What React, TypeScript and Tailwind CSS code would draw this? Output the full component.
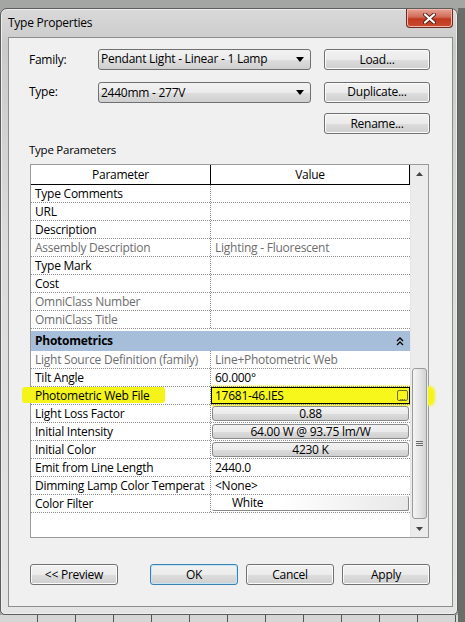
import type { ReactNode } from "react";

// Revit "Type Properties" dialog, Windows 7 look.
type Row = { label: string; value?: string; kind?: "text" | "button" | "file" | "swatch"; dim?: boolean };

const identity: Row[] = [
  { label: "Type Comments" },
  { label: "URL" },
  { label: "Description" },
  { label: "Assembly Description", value: "Lighting - Fluorescent", dim: true },
  { label: "Type Mark" },
  { label: "Cost" },
  { label: "OmniClass Number", dim: true },
  { label: "OmniClass Title", dim: true },
];

const photometrics: Row[] = [
  { label: "Light Source Definition (family)", value: "Line+Photometric Web", dim: true },
  { label: "Tilt Angle", value: "60.000°" },
  { label: "Photometric Web File", value: "17681-46.IES", kind: "file" },
  { label: "Light Loss Factor", value: "0.88", kind: "button" },
  { label: "Initial Intensity", value: "64.00 W @ 93.75 lm/W", kind: "button" },
  { label: "Initial Color", value: "4230 K", kind: "button" },
  { label: "Emit from Line Length", value: "2440.0" },
  { label: "Dimming Lamp Color Temperat", value: "<None>" },
  { label: "Color Filter", value: "White", kind: "swatch" },
];

const btnFace =
  "bg-[linear-gradient(to_bottom,#f2f2f2_0%,#ebebeb_50%,#dddddd_51%,#cfcfcf_100%)]";

function Btn({ children, w, primary }: { children: ReactNode; w: string; primary?: boolean }) {
  return (
    <div
      className={`${w} h-[21px] flex items-center justify-center rounded-[3px] border text-[12px] text-black ${btnFace} ${
        primary ? "border-[#3c7fb1] shadow-[inset_0_0_0_1px_#c4e5f6]" : "border-[#707070] shadow-[inset_0_0_0_1px_#fbfbfb]"
      }`}
    >
      {children}
    </div>
  );
}

function Combo({ text }: { text: string }) {
  return (
    <div className={`w-[213px] h-[21px] flex items-center justify-between rounded-[3px] border border-[#707070] pl-[2px] pr-[6px] text-[12px] ${btnFace}`}>
      <span>{text}</span>
      <svg width="8" height="5" viewBox="0 0 8 5">
        <path d="M0 0h8L4 5z" fill="#000" />
      </svg>
    </div>
  );
}

function ParamRow({ r }: { r: Row }) {
  const dim = r.dim ? "text-[#6d6d6d]" : "text-black";
  return (
    <div className="relative flex h-[18px] border-b border-dotted border-[#8c8c8c] text-[12px] leading-[17px]">
      {r.kind === "file" && (
        <span className="absolute left-[-9px] top-[0px] h-[16px] w-[143px] rounded-[3px] bg-[#f4f41a] blur-[0.6px]" />
      )}
      <div className={`relative w-[180px] shrink-0 whitespace-nowrap border-r border-dotted border-[#8c8c8c] pl-[4px] ${dim}`}>{r.label}</div>
      <div className="relative flex-1 min-w-0">
        {r.kind === "button" && (
          <div className={`mx-[1px] mt-[1px] h-[15px] flex items-center justify-center rounded-[3px] border border-[#8a8a8a] leading-none ${btnFace}`}>
            {r.value}
          </div>
        )}
        {r.kind === "swatch" && (
          <div className="mx-[1px] mt-[1px] h-[15px] flex items-center rounded-[2px] border-b border-r border-[#8a8a8a] bg-[linear-gradient(to_right,#ffffff_0%,#ffffff_35%,#e8e8e8_100%)] pl-[20px] leading-none">
            {r.value}
          </div>
        )}
        {r.kind === "file" && (
          <div className="h-[17px] flex items-center justify-between border border-black bg-[#f7f71c] pl-[3px] pr-[1px] leading-none">
            <span>{r.value}</span>
            <span className="flex h-[11px] w-[11px] items-end justify-center rounded-[2px] border border-[#6b6b3a] text-[8px] leading-[7px]">...</span>
          </div>
        )}
        {(!r.kind || r.kind === "text") && <div className={`pl-[4px] ${dim}`}>{r.value}</div>}
      </div>
    </div>
  );
}

function Chevrons() {
  return (
    <svg width="8" height="9" viewBox="0 0 8 9">
      <path d="M1 4l3-3 3 3M1 8l3-3 3 3" fill="none" stroke="#000" strokeWidth="1.4" />
    </svg>
  );
}

export default function App() {
  return (
    <div className="w-[465px] h-[622px] overflow-hidden bg-[#a3a6a3] pt-[8px] font-['Segoe_UI','Open_Sans',sans-serif] tracking-[-0.25px] text-black">
      <div className="flex h-[614px]">
        <div className="flex w-[458px] flex-col">
          {/* window frame */}
          <div className="flex h-[607px] flex-col rounded-t-[7px] rounded-b-[5px] border border-[#5b5e5b] bg-[linear-gradient(to_bottom,#d8d9d8_0%,#c9cac9_6%,#dcdcdc_40%,#e4e4e4_100%)] shadow-[inset_0_0_0_1px_#eeeeee]">
            <div className="flex h-[28px] shrink-0 items-start justify-between">
              <div className="pl-[7px] pt-[5px] text-[12px] leading-[18px]">Type Properties</div>
              <div className="mr-[4px] flex h-[19px] w-[47px] items-center justify-center rounded-b-[4px] border border-t-0 border-[#6e2a20] bg-[linear-gradient(to_bottom,#e6a496_0%,#d26a57_45%,#c0391f_55%,#c94a30_100%)] shadow-[inset_0_0_0_1px_#f0b7a8]">
                <svg width="13" height="11" viewBox="0 0 13 11">
                  <path d="M2 1.5l9 8M11 1.5l-9 8" stroke="#5a2018" strokeWidth="4" strokeLinecap="round" />
                  <path d="M2 1.5l9 8M11 1.5l-9 8" stroke="#ffffff" strokeWidth="2.2" strokeLinecap="round" />
                </svg>
              </div>
            </div>

            {/* client area */}
            <div className="ml-[7px] flex h-[570px] w-[445px] flex-col border border-[#8c8e8c] bg-[#f0f0f0] pl-[20px] pr-[22px]">
              <div className="mt-[10px] flex items-center">
                <div className="w-[69px] pt-[1px] text-[12px]">Family:</div>
                <Combo text="Pendant Light - Linear - 1 Lamp" />
                <div className="ml-[13px] mt-[1px]">
                  <Btn w="w-[106px]">Load...</Btn>
                </div>
              </div>
              <div className="mt-[11px] flex items-center">
                <div className="w-[69px] text-[12px]">Type:</div>
                <div className="mt-[1px]">
                  <Combo text="2440mm - 277V" />
                </div>
                <div className="ml-[13px]">
                  <Btn w="w-[106px]">Duplicate...</Btn>
                </div>
              </div>
              <div className="mt-[10px] flex justify-end">
                <Btn w="w-[106px]">Rename...</Btn>
              </div>

              <div className="mt-[8px] text-[11.5px] leading-[16px]">Type Parameters</div>

              {/* parameter grid */}
              <div className="relative mt-[6px] ml-[1px] flex h-[374px] w-[399px] border border-[#9a9a9a] bg-white">
                <span className="absolute left-[180px] top-[221px] h-[20px] w-[224px] rounded-r-[6px] bg-[#f4f41a] blur-[1px]" />
                <div className="relative flex w-[379px] flex-col">
                  <div className="flex h-[20px] border-b border-black text-[12px] leading-[19px]">
                    <div className="w-[180px] border-r border-black text-center">Parameter</div>
                    <div className="flex-1 border-r border-black text-center">Value</div>
                  </div>
                  {identity.map((r) => (
                    <ParamRow key={r.label} r={r} />
                  ))}
                  <div className="mt-[2px] flex h-[20px] items-center justify-between bg-[#a7bedb] pl-[4px] pr-[6px] text-[12px] font-bold">
                    <span>Photometrics</span>
                    <Chevrons />
                  </div>
                  {photometrics.map((r) => (
                    <ParamRow key={r.label} r={r} />
                  ))}
                </div>
                {/* scrollbar */}
                <div className="relative flex flex-1 flex-col border-l border-[#e6e6e6] bg-[#ececec]">
                  <div className="flex h-[17px] items-center justify-center">
                    <svg width="7" height="4" viewBox="0 0 7 4">
                      <path d="M0 4L3.5 0L7 4z" fill="#444" />
                    </svg>
                  </div>
                  <div className="flex-1">
                    <div className="mx-[1px] mt-[186px] flex h-[151px] items-center justify-center rounded-[3px] border border-[#9a9a9a] bg-[linear-gradient(to_right,#f4f4f4_0%,#e6e6e6_50%,#d2d2d2_100%)]">
                      <svg width="7" height="6" viewBox="0 0 7 6">
                        <path d="M0 0.5h7M0 2.5h7M0 4.5h7" stroke="#6a6a6a" strokeWidth="1" />
                      </svg>
                    </div>
                  </div>
                  <div className="flex h-[17px] items-center justify-center">
                    <svg width="7" height="4" viewBox="0 0 7 4">
                      <path d="M0 0L7 0L3.5 4z" fill="#444" />
                    </svg>
                  </div>
                </div>
              </div>

              <div className="mt-[26px] flex ml-[1px]">
                <Btn w="w-[88px]">&lt;&lt; Preview</Btn>
                <div className="ml-[32px]">
                  <Btn w="w-[88px]" primary>
                    OK
                  </Btn>
                </div>
                <div className="ml-[8px]">
                  <Btn w="w-[88px]">Cancel</Btn>
                </div>
                <div className="ml-[8px]">
                  <Btn w="w-[88px]">Apply</Btn>
                </div>
              </div>
            </div>
          </div>
          <div className="flex-1 bg-[repeating-linear-gradient(90deg,#d6d6d6_0px,#d6d6d6_37px,#555_37px,#555_38px)]" />
        </div>
        <div className="flex-1 bg-[#6a6d6a]" />
      </div>
    </div>
  );
}
